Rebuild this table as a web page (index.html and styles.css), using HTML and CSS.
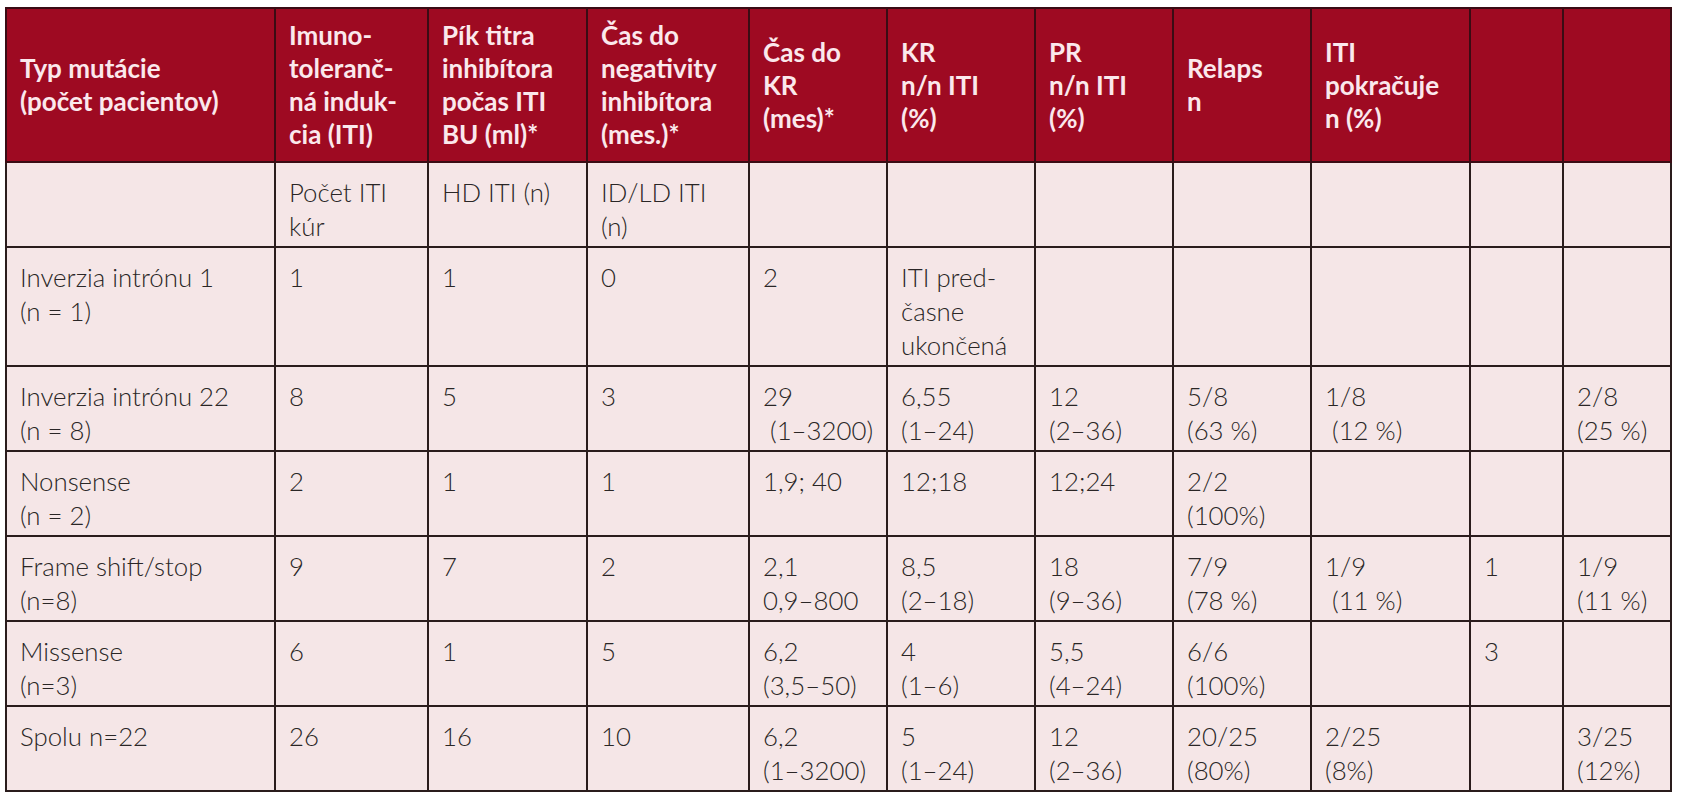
FILE: index.html
```html
<!DOCTYPE html>
<html lang="sk">
<head>
<meta charset="utf-8">
<title>ITI – typ mutácie</title>
<link rel="stylesheet" href="styles.css">
</head>
<body>
<table class="data">
  <colgroup>
    <col class="c1"><col class="c2"><col class="c3"><col class="c4"><col class="c5"><col class="c6"><col class="c7"><col class="c8"><col class="c9"><col class="c10"><col class="c11">
  </colgroup>
  <thead>
    <tr class="head">
      <th>Typ mutácie<br>(počet pacientov)</th>
      <th>Imuno-<br>toleranč-<br>ná induk-<br>cia (ITI)</th>
      <th>Pík titra<br>inhibítora<br>počas ITI<br>BU (ml)*</th>
      <th>Čas do<br>negativity<br>inhibítora<br>(mes.)*</th>
      <th>Čas do<br>KR<br>(mes)*</th>
      <th>KR<br>n/n ITI<br>(%)</th>
      <th>PR<br>n/n ITI<br>(%)</th>
      <th>Relaps<br>n</th>
      <th>ITI<br>pokračuje<br>n (%)</th>
      <th></th>
      <th></th>
    </tr>
  </thead>
  <tbody>
    <tr>
      <td></td><td>Počet ITI<br>kúr</td><td>HD ITI (n)</td><td>ID/LD ITI<br>(n)</td><td></td><td></td><td></td><td></td><td></td><td></td><td></td>
    </tr>
    <tr>
      <td>Inverzia intrónu 1<br>(n = 1)</td><td>1</td><td>1</td><td>0</td><td>2</td><td>ITI pred-<br>časne<br>ukončená</td><td></td><td></td><td></td><td></td><td></td>
    </tr>
    <tr>
      <td>Inverzia intrónu 22<br>(n = 8)</td><td>8</td><td>5</td><td>3</td><td>29<br>&nbsp;(1–3200)</td><td>6,55<br>(1–24)</td><td>12<br>(2–36)</td><td>5/8<br>(63 %)</td><td>1/8<br>&nbsp;(12 %)</td><td></td><td>2/8<br>(25 %)</td>
    </tr>
    <tr>
      <td>Nonsense<br>(n = 2)</td><td>2</td><td>1</td><td>1</td><td>1,9; 40</td><td>12;18</td><td>12;24</td><td>2/2<br>(100%)</td><td></td><td></td><td></td>
    </tr>
    <tr>
      <td>Frame shift/stop<br>(n=8)</td><td>9</td><td>7</td><td>2</td><td>2,1<br>0,9–800</td><td>8,5<br>(2–18)</td><td>18<br>(9–36)</td><td>7/9<br>(78 %)</td><td>1/9<br>&nbsp;(11 %)</td><td>1</td><td>1/9<br>(11 %)</td>
    </tr>
    <tr>
      <td>Missense<br>(n=3)</td><td>6</td><td>1</td><td>5</td><td>6,2<br>(3,5–50)</td><td>4<br>(1–6)</td><td>5,5<br>(4–24)</td><td>6/6<br>(100%)</td><td></td><td>3</td><td></td>
    </tr>
    <tr>
      <td>Spolu n=22</td><td>26</td><td>16</td><td>10</td><td>6,2<br>(1–3200)</td><td>5<br>(1–24)</td><td>12<br>(2–36)</td><td>20/25<br>(80%)</td><td>2/25<br>(8%)</td><td></td><td>3/25<br>(12%)</td>
    </tr>
  </tbody>
</table>
</body>
</html>
```

FILE: styles.css
```css
html, body {
  margin: 0;
  padding: 0;
  background: #ffffff;
}

.data {
  margin: 7px 0 0 5px;
  width: 1667px;
  table-layout: fixed;
  border-collapse: collapse;
  font-family: Lato, "Liberation Sans", Arial, sans-serif;
  font-size: 25.8px;
  font-weight: 300;
  color: #2a2626;
}

.c1 { width: 269px; }
.c2 { width: 153px; }
.c3 { width: 159px; }
.c4 { width: 162px; }
.c5 { width: 138px; }
.c6 { width: 148px; }
.c7 { width: 138px; }
.c8 { width: 138px; }
.c9 { width: 159px; }
.c10 { width: 93px; }
.c11 { width: 108px; }

.data th,
.data td {
  border: 2px solid #2a1c1c;
  text-align: left;
  padding: 0 10px 0 13px;
  white-space: nowrap;
}

.head th {
  height: 152px;
  background: #9e0a22;
  color: #fbe8ec;
  font-weight: 700;
  font-size: 26px;
  line-height: 33px;
  vertical-align: middle;
  border-color: #3a0c14;
}

.data td {
  background: #f5e6e7;
  vertical-align: top;
  line-height: 34px;
  padding-top: 12px;
  padding-bottom: 3px;
}
```
